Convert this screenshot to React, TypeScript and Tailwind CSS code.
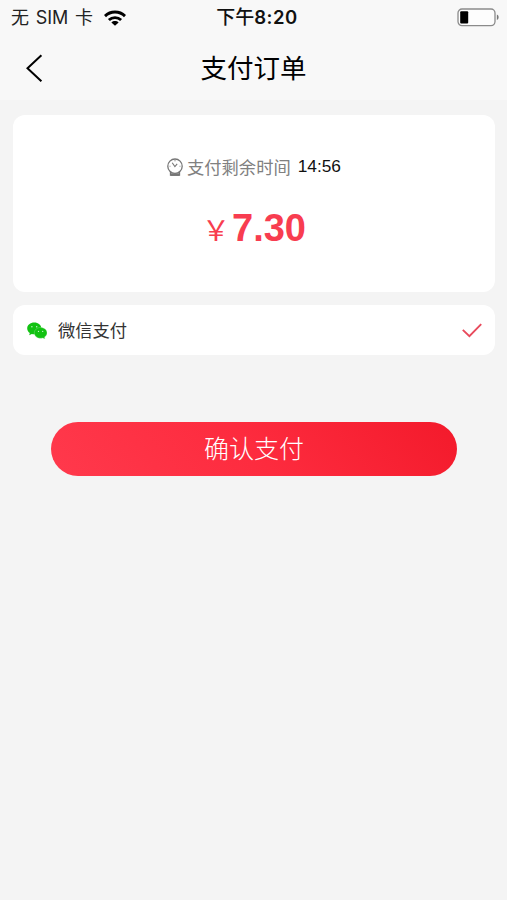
function WifiIcon() {
  return (
    <svg width="22" height="16" viewBox="0 0 22 16" fill="none" stroke="#000" strokeWidth="2.9">
      <path d="M1 6.1C6.6 0.7 15.4 0.7 21 6.1" />
      <path d="M4.9 10C8.3 6.8 13.7 6.8 17.1 10" />
      <path d="M7.4 12.5C9.4 10.6 12.6 10.6 14.6 12.5L11 15.8Z" fill="#000" stroke="none" />
    </svg>
  );
}

function BatteryIcon() {
  return (
    <svg width="43" height="19" viewBox="0 0 43 19" fill="none">
      <rect x="1" y="1" width="37" height="16.6" rx="4" fill="#fdfdfd" stroke="#8b8b8b" strokeWidth="1.3" />
      <rect x="3.2" y="3.2" width="8" height="12.3" rx="1" fill="#000" />
      <path d="M39.9 6.6C42.2 7.2 42.2 11.4 39.9 12Z" fill="#777" />
    </svg>
  );
}

function WatchIcon() {
  return (
    <svg width="16" height="19" viewBox="0 0 16 19" fill="none" stroke="#777" strokeWidth="1.3">
      <circle cx="8" cy="8.2" r="7.2" />
      <path d="M5.2 4.8L7.9 8.5L10.2 5.8M8 2.2V3.2M2.6 8.2H3.4M12.6 8.2H13.4" strokeWidth="1.1" />
      <path d="M3.5 13.8V17.2H12.5V13.8" />
      <path d="M3.5 16.6H12.5" strokeWidth="2.6" />
    </svg>
  );
}

function WechatIcon() {
  return (
    <svg width="20" height="17" viewBox="0 0 20 17" fill="#12c212">
      <path d="M7.3 0.6C3.3 0.6 0.2 3.1 0.2 6.4C0.2 8.3 1.2 9.9 2.8 11L2.2 13.3L4.8 12C5.6 12.2 6.5 12.3 7.3 12.3C11.2 12.3 14.3 9.7 14.3 6.4C14.3 3.2 11.2 0.6 7.3 0.6Z" />
      <path
        d="M13.6 5.5C10.1 5.5 7.3 7.9 7.3 10.9C7.3 13.9 10.1 16.2 13.6 16.2C14.3 16.2 15 16.1 15.7 15.9L18 16.8L17.5 15C19 14.1 20 12.6 20 10.9C20 7.9 17.1 5.5 13.6 5.5Z"
        stroke="#b5efb5"
        strokeWidth="0.3"
      />
      <g fill="#c4f4c4">
        <circle cx="4.9" cy="4.7" r="0.75" />
        <circle cx="9.7" cy="4.7" r="0.75" />
        <circle cx="11.5" cy="9.4" r="0.65" />
        <circle cx="15.7" cy="9.4" r="0.65" />
      </g>
    </svg>
  );
}

export default function App() {
  return (
    <div className="min-h-[900px] w-full bg-[#f4f4f4] font-['Liberation_Sans','Noto_Sans_CJK_SC',sans-serif]">
      <header className="h-[100px] bg-[#f8f8f8] text-black">
        {/* status bar */}
        <div className="grid h-[35px] grid-cols-3 items-center pl-[11px] pr-[7px] font-['Inter','Noto_Sans_CJK_SC',sans-serif] text-[18px] leading-none">
          <div className="flex items-center gap-[11px] whitespace-nowrap text-[#222]">
            <span className="[word-spacing:1.6px]">无 SIM 卡</span>
            <WifiIcon />
          </div>
          <div className="whitespace-nowrap pl-[3px] text-center font-semibold text-[#111]">
            <span className="text-[19px] font-medium">下午</span>
            <span className="text-[18.5px] tracking-[0.5px]">8:20</span>
          </div>
          <div className="flex justify-end">
            <BatteryIcon />
          </div>
        </div>

        {/* nav bar */}
        <div className="grid h-[65px] grid-cols-3 items-center px-[26px]">
          <svg width="17" height="28" viewBox="0 0 17 28" fill="none" stroke="#000" strokeWidth="2">
            <path d="M15.4 1.3L1.5 14.3L15.4 27.3" />
          </svg>
          <h1 className="whitespace-nowrap pt-[3px] text-center text-[26.5px] leading-none">支付订单</h1>
        </div>
      </header>

      <main className="pl-[13px] pr-3 pt-[15px]">
        <section className="flex h-[177px] flex-col items-center rounded-xl bg-white pt-[42px]">
          <div className="flex h-5 items-center whitespace-nowrap text-[17.3px] leading-none">
            <WatchIcon />
            <span className="ml-1 pt-[3px] text-[#808080]">支付剩余时间</span>
            <span className="ml-[7px] text-[#111]">14:56</span>
          </div>
          <div className="mt-[32px] flex items-baseline text-[#f83d50]">
            <span className="font-['Noto_Sans_CJK_SC',sans-serif] text-[28px] leading-none">￥</span>
            <span className="ml-0.5 text-[38px] font-bold leading-none">7.30</span>
          </div>
        </section>

        <section className="mt-[13px] flex h-[50px] items-center rounded-xl bg-white pl-[14px] pr-[13px]">
          <WechatIcon />
          <span className="ml-[11px] pt-[3px] text-[17.3px] leading-none text-[#333]">微信支付</span>
          <svg className="ml-auto" width="20" height="15" viewBox="0 0 20 15" fill="none" stroke="#e84a5c" strokeWidth="1.9">
            <path d="M0.8 6.9L7.4 13.2L19.2 1.1" />
          </svg>
        </section>

        <button className="ml-[38px] mt-[66.5px] flex h-[54px] w-[406px] items-center justify-center rounded-full bg-[linear-gradient(50deg,#ff394c_0%,#fd2b3e_50%,#f31a2b_100%)] pt-px text-[25px] font-light leading-none text-white">
          确认支付
        </button>
      </main>
    </div>
  );
}
